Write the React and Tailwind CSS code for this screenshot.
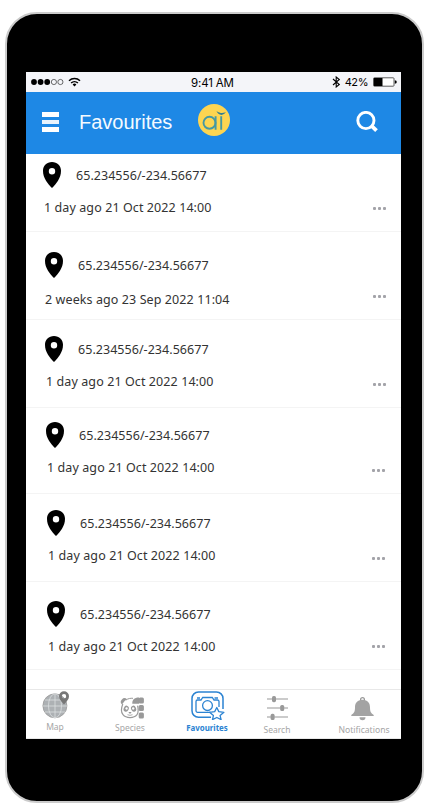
import React from "react";

const ROWS = [
  { row: "h-[78px] pt-2", pin: "pl-[17px]", date: "pl-[18px] mt-2.5", dots: "mt-[45px] mr-[15px]", ago: "1 day ago 21 Oct 2022 14:00" },
  { row: "h-[88px] pt-5", pin: "pl-[19px]", date: "pl-[19px] mt-3", dots: "mt-[43px] mr-[15px]", ago: "2 weeks ago 23 Sep 2022 11:04" },
  { row: "h-[88px] pt-4", pin: "pl-[19px]", date: "pl-5 mt-2.5", dots: "mt-[47px] mr-[15px]", ago: "1 day ago 21 Oct 2022 14:00" },
  { row: "h-[86px] pt-3.5", pin: "pl-5", date: "pl-[21px] mt-2.5", dots: "mt-[47px] mr-4", ago: "1 day ago 21 Oct 2022 14:00" },
  { row: "h-[88px] pt-4", pin: "pl-[21px]", date: "pl-[22px] mt-2.5", dots: "mt-[47px] mr-4", ago: "1 day ago 21 Oct 2022 14:00" },
  { row: "h-[88px] pt-[19px]", pin: "pl-[21px]", date: "pl-[22px] mt-2.5", dots: "mt-[44px] mr-4", ago: "1 day ago 21 Oct 2022 14:00" },
];

function Pin() {
  return (
    <svg className="h-[26px] w-[18px] shrink-0" viewBox="0 0 18 26">
      <path fillRule="evenodd" d="M9 0C3.800 0 0 3.800 0 8.800c0 3.700 1.100 6.800 3 10 1.800 3 4 5.300 6 7.200 2-1.900 4.200-4.200 6-7.200 1.900-3.200 3-6.300 3-10C18 3.800 14.200 0 9 0Zm0 6a3.200 3.200 0 1 1 0 6.400A3.200 3.200 0 0 1 9 6Z" />
    </svg>
  );
}

function StatusBar() {
  return (
    <div className="flex h-5 shrink-0 items-center bg-[#f4f5f9] pl-[5px] pr-1 text-black">
      <svg className="h-[10px] w-[50px] shrink-0" viewBox="0 0 50 10">
        <circle cx="3" cy="5" r="2.900" />
        <circle cx="9.600" cy="5" r="2.900" />
        <circle cx="16.200" cy="5" r="2.900" />
        <g fill="none" stroke="#222" strokeWidth=".65">
          <circle cx="22.900" cy="5" r="2.600" />
          <circle cx="29.400" cy="5" r="2.600" />
        </g>
        <g fill="none" stroke="#000" strokeWidth="1.500">
          <path d="M38 3.700a8 8 0 0 1 11 0" />
          <path d="M40.100 6a5 5 0 0 1 6.800 0" />
        </g>
        <path d="M41.600 7.400a2.900 2.900 0 0 1 3.800 0L43.500 9.600Z" />
      </svg>
      <span className="ml-[110px] whitespace-nowrap pt-0.5 font-['Inter',sans-serif] text-[11.500px] leading-4 tracking-[-0.150px]">9:41 AM</span>
      <svg className="ml-auto h-3 w-[9px] shrink-0" viewBox="0 0 9 12" fill="none" stroke="#000" strokeWidth="1.100">
        <path d="m1 3 6.300 5.500L4.200 11V1l3.100 2.500L1 9" />
      </svg>
      <span className="ml-1 font-['Inter',sans-serif] text-[11px] leading-4 tracking-[-0.450px]">42%</span>
      <svg className="ml-[5px] h-[10px] w-6 shrink-0" viewBox="0 0 24 10">
        <rect x=".5" y=".8" width="20.500" height="8.400" rx=".8" fill="#fff" stroke="#333" strokeWidth=".8" />
        <path d="M1 1h8.500v8H1zM21.800 3.200q2 .3 2 1.800t-2 1.800z" />
      </svg>
    </div>
  );
}

function Header() {
  return (
    <div className="flex h-[62px] shrink-0 items-center bg-[#1e88e5] pl-4 pr-[23px]">
      <div className="flex w-[17px] flex-col gap-[3px] pb-0.5">
        <div className="h-[5px] bg-white" />
        <div className="h-[4px] bg-[#e8f3fd]" />
        <div className="h-[5px] bg-white" />
      </div>
      <h1 className="ml-5 w-[119px] pb-0.5 font-['Liberation_Sans',Arial,sans-serif] text-[20px] leading-6 text-[#f4faff]">Favourites</h1>
      <svg className="mb-[6px] size-8 rounded-full bg-[#fdd551]" viewBox="0 0 32 32" fill="none" stroke="#4598a3" strokeWidth="1.900">
        <circle cx="11.500" cy="18.800" r="6" />
        <path d="M17.600 12.200V25.700M23.200 12.200V25.700" />
        <path d="M18.500 6.900c2 1.500 4 2 5.500 2.200 1.400-.6 2.500-.7 4-.5-1.400 1.100-2.700 2-4.400 2.300-2.400-.2-4.300-1.800-5.100-4Z" fill="#347f91" stroke="none" />
      </svg>
      <svg className="mb-0.5 ml-auto size-[22px]" viewBox="0 0 22 22" fill="none" stroke="#fff">
        <circle cx="9.900" cy="9.500" r="8.100" strokeWidth="2.900" />
        <path d="m15 14.400 5.500 5.300" strokeWidth="3.800" />
      </svg>
    </div>
  );
}

function Row({ item }) {
  return (
    <div className={"flex shrink-0 items-start border-b border-[#f4f4f4] " + item.row}>
      <div className="flex-1 whitespace-nowrap font-['Noto_Sans','Open_Sans',sans-serif] text-[#333]">
        <div className={"flex items-center gap-[15px] " + item.pin}>
          <Pin />
          <span className="pt-0.5 text-[12.500px] leading-5 tracking-[0.040px]">65.234556/-234.56677</span>
        </div>
        <div className={"text-[12.500px] leading-5 tracking-[0.090px] " + item.date}>{item.ago}</div>
      </div>
      <div className={"flex gap-0.5 " + item.dots}>
        <i className="size-[3px] rounded-[1px] bg-[#a3a3a9]" />
        <i className="size-[3px] rounded-[1px] bg-[#a3a3a9]" />
        <i className="size-[3px] rounded-[1px] bg-[#a3a3a9]" />
      </div>
    </div>
  );
}

function GlobeIcon() {
  return (
    <svg className="h-7 w-7" viewBox="0 0 28 28" fill="none">
      <circle cx="12.900" cy="14.800" r="12" fill="#adb1b4" stroke="#999" strokeWidth=".8" />
      <g stroke="#dcdfe1" strokeWidth=".8">
        <path d="M13 3v24M1 15h24M3 9h20M3 21h20" />
        <ellipse cx="13" cy="14.800" rx="6.500" ry="12" />
      </g>
      <path fill="#777" fillRule="evenodd" d="M22 .2a5 5 0 0 1 5 5c0 3-2.200 5.200-5 8.300-2.800-3.100-5-5.300-5-8.300a5 5 0 0 1 5-5Zm0 2.800a2.200 2.200 0 1 0 0 4.400A2.200 2.200 0 0 0 22 3Z" />
    </svg>
  );
}

function PandaIcon() {
  return (
    <svg className="h-[22px] w-6" viewBox="0 0 24 22" fill="#999">
      <path d="M2.800 7C1.200 11 .7 15 3 17.700c3.100 3.900 11 3.900 14 0 1.500-2.200 1.400-5.500.6-9" fill="none" stroke="#999" strokeWidth="1.200" />
      <path d="M2 7.500A3.300 3.300 0 1 1 7 2.300Q3.800 4 2 7.500Z" />
      <path d="M6 3c2.200-1.500 4.500-1.900 7-1.700" fill="none" stroke="#999" />
      <path d="M12.300 6.800C12 3 14 .4 19 .4v6.400Z" />
      <g transform="rotate(25 6.200 11.700)">
        <ellipse cx="6.200" cy="11.700" rx="2.500" ry="3.100" />
        <circle cx="6.400" cy="11.300" r="1.200" fill="#fff" />
      </g>
      <g transform="rotate(-25 13.600 11.700)">
        <ellipse cx="13.600" cy="11.700" rx="2.500" ry="3.100" />
        <circle cx="13.400" cy="11.300" r="1.200" fill="#fff" />
      </g>
      <path d="M8.300 15h3.400l-1.700 1.900Z" />
      <path d="M7.500 17.700q2.500 1.300 5 0" fill="none" stroke="#999" strokeWidth=".8" />
      <rect x="18.700" y=".5" width="5.200" height="6" rx="1.500" />
      <rect x="18.700" y="8" width="5.200" height="6" rx="1.500" />
      <rect x="18.700" y="15.500" width="5.200" height="6" rx="1.500" />
    </svg>
  );
}

function CameraIcon() {
  return (
    <svg className="h-[29px] w-[34px]" viewBox="0 0 34 29" fill="none" stroke="#2b83d2" strokeWidth="1.300">
      <path d="M20 26.300H7.500A6.500 6.500 0 0 1 1 19.800V7.500A6.500 6.500 0 0 1 7.500 1h18A6.500 6.500 0 0 1 32 7.500V18" strokeWidth="1.500" />
      <path d="M19.800 21.300H6.500a1.500 1.500 0 0 1-1.500-1.500v-9.300A1.500 1.500 0 0 1 6.500 9H10l1.700-2.500h9.600L23 9h3.500a1.500 1.500 0 0 1 1.500 1.500V16M6 7h3M23.500 7H27" />
      <circle cx="16.500" cy="14.600" r="4.900" />
      <path fill="#fff" strokeLinejoin="round" d="m25.800 16.500 2 4.100 5.100.7-3.800 3.300 1 4-4.300-2.100-4.300 2.100.9-4-3.800-3.300 5.100-.7Z" />
    </svg>
  );
}

function SlidersIcon() {
  return (
    <svg className="h-6 w-[21px]" viewBox="0 0 21 24">
      <path d="M0 3h21M0 12h21M0 21h21" stroke="#bbb" strokeWidth="1.600" />
      <g fill="#999">
        <rect x="5" y="0" width="4" height="6.200" rx="1.600" />
        <rect x="13.200" y="8.900" width="4" height="6.200" rx="1.600" />
        <rect x="3.600" y="17.800" width="4" height="6.200" rx="1.600" />
      </g>
    </svg>
  );
}

function BellIcon() {
  return (
    <svg className="h-6 w-[23px]" viewBox="0 0 23 24" fill="#a3a3a3">
      <circle cx="11.500" cy="2.600" r="1.900" fill="none" stroke="#999" strokeWidth="1.300" />
      <path d="M11.500 2.800c-5.600.3-7.500 3.700-7.500 7.700 0 4.500-1.200 5.700-3.700 7.500v1h22.400v-1c-2.500-1.800-3.700-3-3.700-7.500 0-4-1.900-7.400-7.500-7.700ZM8.500 20.200h6a3 3 0 0 1-6 0Z" />
    </svg>
  );
}

function Tab({ className, label, children }) {
  return (
    <div className={"flex shrink-0 flex-col items-center whitespace-nowrap font-['Noto_Sans','Open_Sans',sans-serif] " + className}>
      {children}
      <span className="leading-3">{label}</span>
    </div>
  );
}

function TabBar() {
  return (
    <div className="flex h-[50px] shrink-0 items-start border-y border-[#e8e8e8] text-[8.500px] text-[#a6a6a6]">
      <Tab className="ml-4 w-7 gap-0.5 pt-px" label={<span className="mr-0.5">Map</span>}><GlobeIcon /></Tab>
      <Tab className="ml-[43px] w-[34px] gap-[3px] pt-[7px]" label="Species"><div className="pl-1"><PandaIcon /></div></Tab>
      <Tab className="ml-[38px] w-[44px] gap-0.5 pt-px text-[7.900px] font-bold text-[#2b83d2]" label="Favourites"><div className="pl-px"><CameraIcon /></div></Tab>
      <Tab className="ml-[33px] w-[30px] gap-1 pt-[6px]" label="Search"><SlidersIcon /></Tab>
      <Tab className="ml-[44px] w-[56px] gap-1 pt-[7px] text-[8.600px]" label="Notifications"><div className="-ml-[3px] -mb-px"><BellIcon /></div></Tab>
    </div>
  );
}

export default function App() {
  return (
    <div className="h-[812px] w-[434px] overflow-hidden bg-white pl-[5px] pt-3">
      <div className="h-[791px] w-[419px] rounded-[32px] border-2 border-[#cbcbcb] bg-black pl-[19px] pt-[58px]">
        <div className="flex h-[667px] w-[375px] flex-col overflow-hidden bg-white">
          <StatusBar />
          <Header />
          {ROWS.map((item, i) => (
            <Row key={i} item={item} />
          ))}
          <div className="flex-1" />
          <TabBar />
        </div>
      </div>
    </div>
  );
}
